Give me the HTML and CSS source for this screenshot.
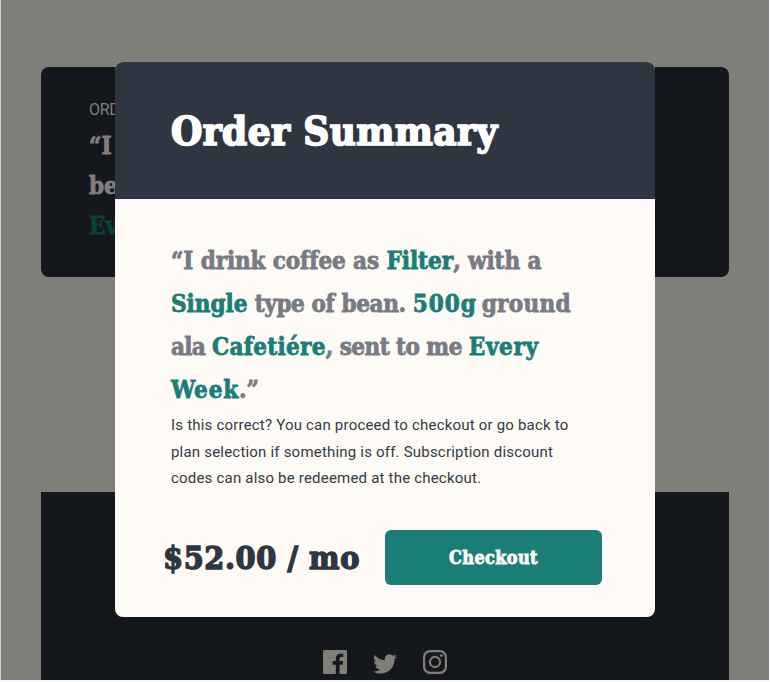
FILE: index.html
```html
<!DOCTYPE html>
<html lang="en">
<head>
<meta charset="utf-8">
<title>Order Summary</title>
<link rel="stylesheet" href="styles.css">
</head>
<body>
<div class="page">
  <section class="summary">
    <p class="summary-label">ORDER</p>
    <p class="summary-text">“I drink<br>bean.<br><em>Every</em></p>
  </section>
  <footer class="footer">
    <svg class="icon" viewBox="0 0 24 24"><path d="M22.675 0H1.325C.593 0 0 .593 0 1.325v21.351C0 23.407.593 24 1.325 24H12.82v-9.294H9.692v-3.622h3.128V8.413c0-3.1 1.893-4.788 4.659-4.788 1.325 0 2.463.099 2.795.143v3.24l-1.918.001c-1.504 0-1.795.715-1.795 1.763v2.313h3.587l-.467 3.622h-3.12V24h6.116c.73 0 1.323-.593 1.323-1.325V1.325C24 .593 23.407 0 22.675 0z"/></svg>
    <svg class="icon" viewBox="0 0 24 24"><path d="M24 4.557a9.83 9.83 0 0 1-2.828.775 4.932 4.932 0 0 0 2.165-2.724 9.864 9.864 0 0 1-3.127 1.195 4.916 4.916 0 0 0-3.594-1.555c-3.179 0-5.515 2.966-4.797 6.045A13.978 13.978 0 0 1 1.671 3.149a4.93 4.93 0 0 0 1.523 6.574 4.903 4.903 0 0 1-2.229-.616c-.054 2.281 1.581 4.415 3.949 4.89a4.935 4.935 0 0 1-2.224.084 4.928 4.928 0 0 0 4.6 3.419A9.9 9.9 0 0 1 0 19.54a13.94 13.94 0 0 0 7.548 2.212c9.142 0 14.307-7.721 13.995-14.646A10.025 10.025 0 0 0 24 4.557z" transform="translate(0 1.9)"/></svg>
    <svg class="icon" viewBox="0 0 24 24"><path fill-rule="evenodd" d="M7 0h10a7 7 0 0 1 7 7v10a7 7 0 0 1-7 7H7a7 7 0 0 1-7-7V7a7 7 0 0 1 7-7zm.2 2.2a5 5 0 0 0-5 5v9.6a5 5 0 0 0 5 5h9.6a5 5 0 0 0 5-5V7.200a5 5 0 0 0-5-5zM12 5.838a6.162 6.162 0 1 1 0 12.324 6.162 6.162 0 0 1 0-12.324zM12 8a4 4 0 1 0 0 8 4 4 0 0 0 0-8z"/><circle cx="18.4" cy="5.6" r="1.44"/></svg>
  </footer>
</div>
<div class="overlay">
  <div class="modal">
    <header class="modal-header"><h1>Order Summary</h1></header>
    <div class="modal-body">
      <p class="quote"><span class="k1">“I drink coffee as </span><em>Filter</em><span class="k2">, with a</span><br><em>Single</em><span class="k3"> type of bean. </span><em class="k4">500g</em><span class="k10"> ground</span><br><span class="k5">ala </span><em class="k6">Cafetiére</em><span class="k7">, sent to me </span><em class="k8">Every</em><br><em class="k9">Week</em>.”</p>
      <p class="note">Is this correct? You can proceed to checkout or go back to<br>plan selection if something is off. Subscription discount<br>codes can also be redeemed at the checkout.</p>
      <div class="actions">
        <strong class="price">$52.00 / mo</strong>
        <button class="checkout">Checkout</button>
      </div>
    </div>
  </div>
</div>
</body>
</html>
```
FILE: styles.css
```css
* { box-sizing: border-box; margin: 0; }

html { background: #f6f8fa; }

body {
  height: 682px;
  overflow: hidden;
  font-family: "DejaVu Serif Condensed", "DejaVu Serif", serif;
  font-weight: bold;
}

em { font-style: normal; }

.page {
  height: 680px;
  margin-right: 1px;
  padding: 67px 40px 0;
  border-left: 1px solid #cbd2d9;
  background: #807e79;
  overflow: hidden;
}

.summary {
  height: 210px;
  padding: 30px 48px;
  border-radius: 8px;
  background: #14181d;
  color: #807f7d;
}

.summary-label {
  font: 16px/26px Roboto, sans-serif;
  letter-spacing: -0.3px;
}

.summary-text {
  font-size: 24px;
  line-height: 40px;
  margin-top: 3px;
  white-space: nowrap;
  -webkit-text-stroke: 0.8px;
}

.summary-text em { color: #0b403b; }

.footer {
  display: flex;
  justify-content: center;
  gap: 26px;
  height: 188px;
  margin-top: 215px;
  padding-top: 158px;
  background: #14181d;
}

.icon {
  width: 24px;
  height: 24px;
  fill: #807e79;
}

.overlay {
  position: absolute;
  inset: 0;
  padding-top: 62px;
}

.modal {
  width: 540px;
  height: 555px;
  margin: 0 auto;
  border-radius: 8px;
  background: #fefbf6;
  overflow: hidden;
}

.modal-header {
  height: 137px;
  padding: 45px 56px 0;
  background: #2e3641;
  color: #fff;
}

.modal-header h1 {
  font-size: 40px;
  line-height: 48px;
  letter-spacing: 0.4px;
  -webkit-text-stroke: 1.7px;
}

.modal-body { padding: 40px 53px 0 56px; }

.quote {
  font-size: 24px;
  line-height: 43px;
  color: #787b83;
  white-space: nowrap;
  -webkit-text-stroke: 0.8px;
}

.quote em { color: #1a7e77; }

.k1 { letter-spacing: -0.12px; }
.k2 { letter-spacing: -0.1px; }
.k3 { letter-spacing: -0.4px; }
.k4 { letter-spacing: 1px; }
.k5 { letter-spacing: -0.7px; }
.k6 { letter-spacing: 0.3px; }
.k7 { letter-spacing: -0.55px; }
.k8 { letter-spacing: 0.65px; }
.k9 { letter-spacing: 0.8px; }
.k10 { word-spacing: -3px; letter-spacing: 0.3px; }

.note {
  margin-top: 1px;
  font: 15px/26.6px Roboto, sans-serif;
  letter-spacing: 0.2px;
  color: #323a45;
  white-space: nowrap;
}

.actions {
  display: flex;
  align-items: center;
  justify-content: space-between;
  margin: 38px 0 0 -8px;
}

.price {
  padding-top: 2px;
  font-size: 32px;
  letter-spacing: 0.6px;
  color: #2e3641;
  white-space: nowrap;
  -webkit-text-stroke: 1.4px;
}

.checkout {
  width: 217px;
  height: 55px;
  border: 0;
  border-radius: 6px;
  background: #1a7e77;
  color: #fefbf6;
  font: inherit;
  font-size: 18px;
  letter-spacing: 0.35px;
  -webkit-text-stroke: 0.8px;
}
```
